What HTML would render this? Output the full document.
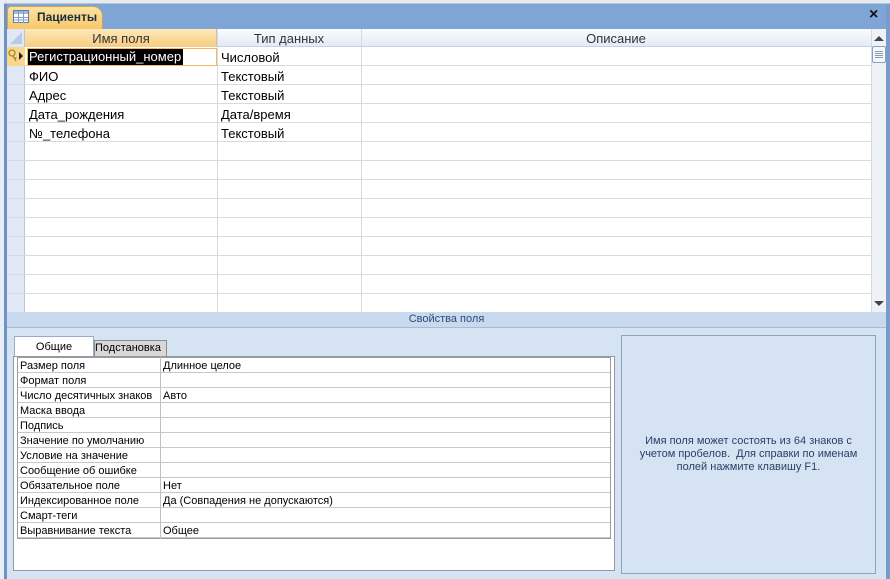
<!DOCTYPE html>
<html><head><meta charset="utf-8"><style>
*{margin:0;padding:0;box-sizing:border-box}
body{width:890px;height:579px;overflow:hidden;background:#d6e3f3;font-family:"Liberation Sans","DejaVu Sans",sans-serif;position:relative}
.a{position:absolute}
.gt{font-size:13px;color:#000;white-space:nowrap}
.pt{font-size:11px;white-space:nowrap;color:#000}
</style></head><body>
<div class="a" style="left:0;top:0;width:890px;height:4px;background:#e6ebf2;border-bottom:1px solid #b9c6d8"></div>
<div class="a" style="left:0;top:0;width:4px;height:579px;background:#e8eef6"></div>
<div class="a" style="left:4px;top:4px;width:3px;height:575px;background:#6f93c6"></div>
<div class="a" style="left:886px;top:4px;width:4px;height:575px;background:#7b9ccb"></div>
<div class="a" style="left:7px;top:4px;width:879px;height:25px;background:#7fa5d6"></div>
<div class="a" style="left:7px;top:6px;width:96px;height:23px;background:linear-gradient(#fbe3a0,#f7c76a);border:1px solid #c9a45c;border-bottom:none;border-radius:4px 10px 0 0"></div>
<svg class="a" style="left:13px;top:10px" width="16" height="13"><rect x="0.5" y="0.5" width="15" height="12" fill="#fff" stroke="#5b7fb5"/><rect x="1" y="1" width="14" height="3" fill="#9db8de"/><path d="M1 7.5h14M1 10h14M5.5 1v12M10.5 1v12" stroke="#7f9cc6"/></svg>
<div class="a" style="left:37px;top:10px;font-size:12px;font-weight:bold;color:#1b2c44">Пациенты</div>
<div class="a" style="left:869px;top:6px;font-size:16px;font-weight:bold;color:#111">×</div>
<div class="a" style="left:7px;top:29px;width:864px;height:283px;background:#fff"></div>
<div class="a" style="left:7px;top:29px;width:18px;height:283px;background:#dfe8f4;border-right:1px solid #b8c6da"></div>
<svg class="a" style="left:9px;top:31px" width="14" height="14"><path d="M13 1V13H1Z" fill="#b9cbe2"/></svg>
<div class="a" style="left:25px;top:29px;width:192px;height:18px;background:linear-gradient(#fde8b8,#f7cd80);border-right:1px solid #d5c29a"></div>
<div class="a" style="left:217px;top:29px;width:654px;height:18px;background:linear-gradient(#fafcff,#e3ebf6);border-bottom:1px solid #c5d2e3"></div>
<div class="a" style="left:361px;top:29px;width:1px;height:283px;background:#d5dbe3"></div>
<div class="a" style="left:217px;top:29px;width:1px;height:283px;background:#d5dbe3"></div>
<div class="a gt" style="left:25px;top:31px;width:192px;text-align:center;color:#333">Имя поля</div>
<div class="a gt" style="left:217px;top:31px;width:144px;text-align:center;color:#333">Тип данных</div>
<div class="a gt" style="left:361px;top:31px;width:510px;text-align:center;color:#333">Описание</div>
<div class="a" style="left:7px;top:66px;width:864px;height:247px;background:repeating-linear-gradient(to bottom,transparent 0,transparent 18px,#d5dbe3 18px,#d5dbe3 19px)"></div>
<div class="a" style="left:7px;top:65px;width:864px;height:1px;background:#d5dbe3"></div>
<div class="a" style="left:7px;top:47px;width:18px;height:19px;background:#f8d78e"></div>
<svg class="a" style="left:8px;top:49px" width="16" height="14"><circle cx="4" cy="4" r="3" fill="none" stroke="#b08a20" stroke-width="1.3"/><path d="M5 7l3 5M6.5 9.5l2-1" stroke="#b08a20" stroke-width="1.3"/><path d="M11 3l4 4-4 4z" fill="#222"/></svg>
<div class="a" style="left:27px;top:48px;width:190px;height:18px;border:1px solid #f3b95c"></div>
<div class="a gt" style="left:28px;top:49px;background:#000;color:#fff;padding:0 2px 1px 1px">Регистрационный_номер</div>
<div class="a gt" style="left:221px;top:50px">Числовой</div>
<div class="a gt" style="left:29px;top:69px">ФИО</div><div class="a gt" style="left:221px;top:69px">Текстовый</div>
<div class="a gt" style="left:29px;top:88px">Адрес</div><div class="a gt" style="left:221px;top:88px">Текстовый</div>
<div class="a gt" style="left:29px;top:107px">Дата_рождения</div><div class="a gt" style="left:221px;top:107px">Дата/время</div>
<div class="a gt" style="left:29px;top:126px">№_телефона</div><div class="a gt" style="left:221px;top:126px">Текстовый</div>
<div class="a" style="left:871px;top:29px;width:15px;height:283px;background:#eef2f7;border-left:1px solid #d0d9e5"></div>
<svg class="a" style="left:873px;top:35px" width="12" height="8"><path d="M1 6L6 1 11 6z" fill="#444"/></svg>
<div class="a" style="left:872px;top:46px;width:14px;height:17px;background:#f4f7fb;border:1px solid #8ba1bf;border-radius:2px"></div>
<svg class="a" style="left:875px;top:49px" width="8" height="11"><path d="M0 2.5h8M0 4.5h8M0 6.5h8M0 8.5h8" stroke="#8a9ab0"/></svg>
<svg class="a" style="left:873px;top:299px" width="12" height="8"><path d="M1 2L6 7 11 2z" fill="#444"/></svg>
<div class="a" style="left:7px;top:312px;width:879px;height:16px;background:#c9daef;border-bottom:1px solid #a6bcd8"></div>
<div class="a" style="left:7px;top:313px;width:879px;text-align:center;font-size:11px;color:#2a4a78">Свойства поля</div>
<div class="a" style="left:14px;top:336px;width:80px;height:22px;background:#fff;border:1px solid #9aaabf;border-bottom:none"></div>
<div class="a pt" style="left:14px;top:341px;width:80px;text-align:center">Общие</div>
<div class="a" style="left:94px;top:340px;width:73px;height:17px;background:#d8d8d8;border:1px solid #8e8e8e"></div>
<div class="a pt" style="left:95px;top:342px">Подстановка</div>
<div class="a" style="left:13px;top:356px;width:602px;height:215px;background:#fff;border:1px solid #8e9aab"></div>
<div class="a" style="left:17px;top:357px;width:594px;height:182px;border:1px solid #9a9a9a;background:repeating-linear-gradient(to bottom,transparent 0,transparent 14px,#c8c8c8 14px,#c8c8c8 15px)"></div>
<div class="a" style="left:160px;top:357px;width:1px;height:182px;background:#c0c0c0"></div>
<div class="a" style="left:20px;top:359px;line-height:15px" >
<div class="pt">Размер поля</div><div class="pt">Формат поля</div><div class="pt">Число десятичных знаков</div><div class="pt">Маска ввода</div><div class="pt">Подпись</div><div class="pt">Значение по умолчанию</div><div class="pt">Условие на значение</div><div class="pt">Сообщение об ошибке</div><div class="pt">Обязательное поле</div><div class="pt">Индексированное поле</div><div class="pt">Смарт-теги</div><div class="pt">Выравнивание текста</div></div>
<div class="a" style="left:163px;top:359px;line-height:15px">
<div class="pt">Длинное целое</div><div class="pt">&nbsp;</div><div class="pt">Авто</div><div class="pt">&nbsp;</div><div class="pt">&nbsp;</div><div class="pt">&nbsp;</div><div class="pt">&nbsp;</div><div class="pt">&nbsp;</div><div class="pt">Нет</div><div class="pt">Да (Совпадения не допускаются)</div><div class="pt">&nbsp;</div><div class="pt">Общее</div></div>
<div class="a" style="left:621px;top:335px;width:255px;height:239px;border:1px solid #8fa3bf;background:#d5e3f3"></div>
<div class="a" style="left:621px;top:435px;width:255px;text-align:center;font-size:11px;line-height:13px;color:#2a3f66;white-space:nowrap">Имя поля может состоять из 64 знаков с<br>учетом пробелов.&nbsp; Для справки по именам<br>полей нажмите клавишу F1.</div>
</body></html>
